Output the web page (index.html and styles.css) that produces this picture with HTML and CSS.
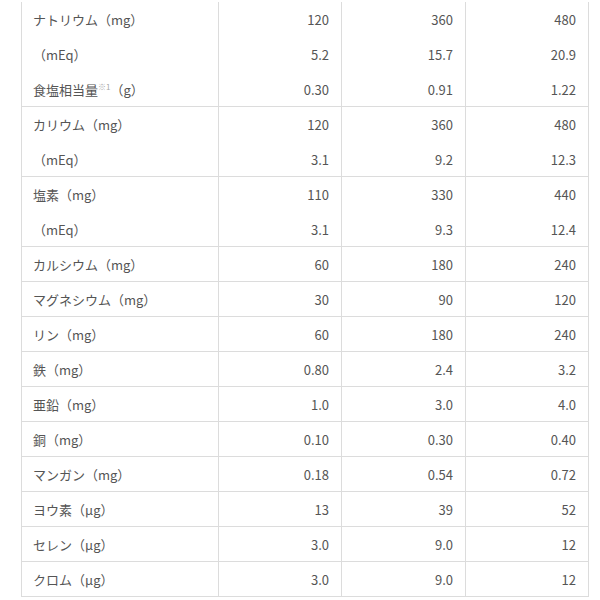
FILE: index.html
```html
<!DOCTYPE html>
<html lang="ja">
<head>
<meta charset="utf-8">
<link rel="stylesheet" href="styles.css">
</head>
<body>
<div class="wrap">
<table class="nutri">
<colgroup><col class="c1"><col class="c2"><col class="c3"><col class="c4"></colgroup>
<tbody>
<tr><td>ナトリウム（mg）</td><td>120</td><td>360</td><td>480</td></tr>
<tr><td>（mEq）</td><td>5.2</td><td>15.7</td><td>20.9</td></tr>
<tr class="end"><td>食塩相当量<sup>※1</sup>（g）</td><td>0.30</td><td>0.91</td><td>1.22</td></tr>
<tr><td>カリウム（mg）</td><td>120</td><td>360</td><td>480</td></tr>
<tr class="end"><td>（mEq）</td><td>3.1</td><td>9.2</td><td>12.3</td></tr>
<tr><td>塩素（mg）</td><td>110</td><td>330</td><td>440</td></tr>
<tr class="end"><td>（mEq）</td><td>3.1</td><td>9.3</td><td>12.4</td></tr>
<tr class="end"><td>カルシウム（mg）</td><td>60</td><td>180</td><td>240</td></tr>
<tr class="end"><td>マグネシウム（mg）</td><td>30</td><td>90</td><td>120</td></tr>
<tr class="end"><td>リン（mg）</td><td>60</td><td>180</td><td>240</td></tr>
<tr class="end"><td>鉄（mg）</td><td>0.80</td><td>2.4</td><td>3.2</td></tr>
<tr class="end"><td>亜鉛（mg）</td><td>1.0</td><td>3.0</td><td>4.0</td></tr>
<tr class="end"><td>銅（mg）</td><td>0.10</td><td>0.30</td><td>0.40</td></tr>
<tr class="end"><td>マンガン（mg）</td><td>0.18</td><td>0.54</td><td>0.72</td></tr>
<tr class="end"><td>ヨウ素（μg）</td><td>13</td><td>39</td><td>52</td></tr>
<tr class="end"><td>セレン（μg）</td><td>3.0</td><td>9.0</td><td>12</td></tr>
<tr class="end"><td>クロム（μg）</td><td>3.0</td><td>9.0</td><td>12</td></tr>
</tbody>
</table>
</div>
</body>
</html>
```
FILE: styles.css
```css
html, body {
  margin: 0;
  padding: 0;
  background: #fff;
}
.wrap {
  padding: 2px 0 0 21px;
}
.nutri {
  border-collapse: separate;
  border-spacing: 0;
  table-layout: fixed;
  width: 568px;
  font-family: "Noto Sans CJK JP", "Noto Sans", sans-serif;
  font-size: 13px;
  color: #555;
}
.c1 { width: 197px; }
.c2 { width: 123px; }
.c3 { width: 124px; }
.c4 { width: 124px; }
.nutri td {
  box-sizing: border-box;
  height: 35px;
  padding: 0 12px 0 11px;
  border-left: 1px solid #dcdcdc;
  text-align: right;
  vertical-align: middle;
  line-height: 1;
  white-space: nowrap;
}
.nutri td:first-child {
  text-align: left;
}
.nutri td:last-child {
  border-right: 1px solid #dcdcdc;
}
.nutri tr.end td {
  border-bottom: 1px solid #dcdcdc;
}
.nutri sup {
  font-size: 8px;
  color: #aaa;
  vertical-align: 5px;
  line-height: 0;
}
```
